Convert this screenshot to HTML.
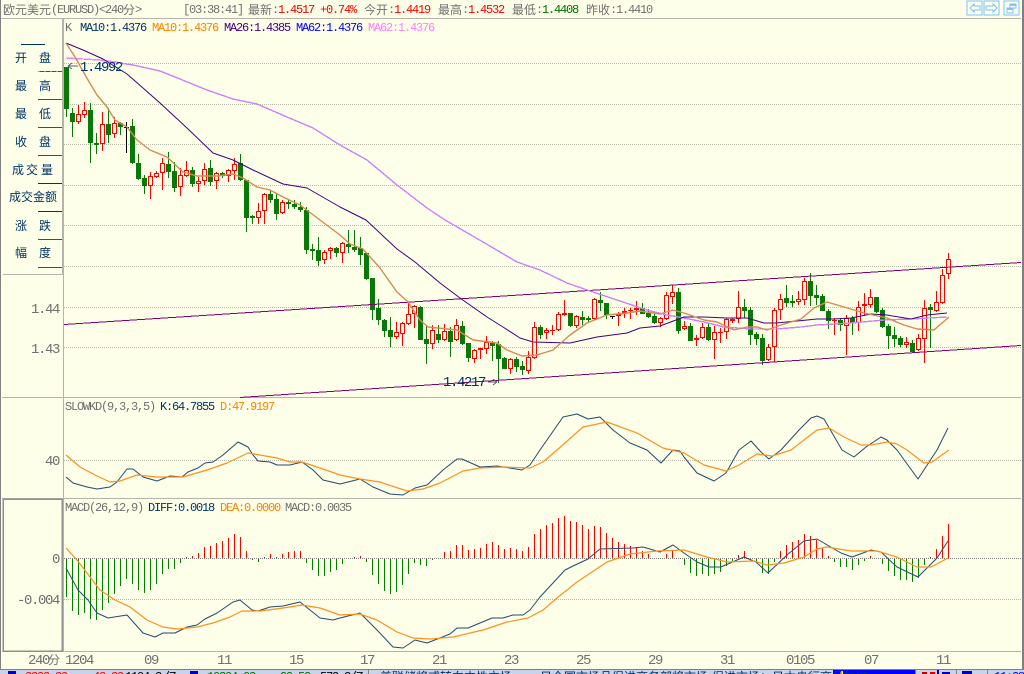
<!DOCTYPE html>
<html><head><meta charset="utf-8"><style>
html,body{margin:0;padding:0;background:#fdffe8;width:1024px;height:674px;overflow:hidden}
svg{display:block}
text{white-space:pre}
.c{font:12px "WenQuanYi Zen Hei","Noto Sans CJK SC",sans-serif}
.m{font:12px "Liberation Mono",monospace;letter-spacing:-1.2px}
.a{font:14px "Liberation Mono",monospace;letter-spacing:-1.4px;fill:#707070}
.g{fill:#707070}.r{fill:#f00}.gr{fill:#007000}.n{fill:#003366}.o{fill:#ff8000}
</style></head><body>
<svg id="s" xmlns="http://www.w3.org/2000/svg" width="1024" height="674" viewBox="0 0 1024 674">
<rect width="1024" height="674" fill="#fdffe8"/>
<g shape-rendering="crispEdges">
<g stroke="#b8b8a8" stroke-dasharray="1 1" fill="none">
<path d="M64 63.5H1021M64 104.5H1021M64 144.5H1021M64 185.5H1021M64 225.5H1021M64 266.5H1021M64 307.5H1021M64 347.5H1021M64 460.5H1021M64 599.5H1021"/>
<path d="M64 558.5H1021" stroke="#808078"/>
</g>
<path d="M2 397.5H1021M2 498.5H1021M2 651.5H1021" stroke="#b4b4ac" fill="none"/>
<path d="M1 18.5H1021" stroke="#b4b4ac"/>
<path d="M63.5 18V651M3 274.5H63M62.5 18V274" stroke="#b4b4ac" fill="none"/>
<rect x="0" y="0" width="1" height="670" fill="#808080"/>
<rect x="1022" y="0" width="2" height="670" fill="#808080"/>
<rect x="3" y="499" width="59" height="152" fill="none" stroke="#909090" stroke-width="1.5"/>
<rect x="0" y="670" width="1024" height="4" fill="#c8d4ec"/>
<rect x="0" y="669" width="1024" height="1" fill="#808080"/>
<rect x="833" y="670" width="82" height="4" fill="#0000ff"/>
<rect x="840" y="671" width="3" height="3" fill="#ffff00"/>
<rect x="368" y="670" width="1" height="4" fill="#808080"/>
<rect x="915" y="670" width="1" height="4" fill="#808080"/>
<rect x="956" y="670" width="1" height="4" fill="#808080"/>
<rect x="987" y="670" width="1" height="4" fill="#808080"/>
<rect x="962" y="671" width="10" height="3" fill="#0000c0"/>
<rect x="8" y="671" width="8" height="3" fill="#0000c0"/>
<rect x="190" y="671" width="8" height="3" fill="#0000c0"/>
<rect x="922" y="672" width="5" height="2" fill="#c00000"/><rect x="930" y="672" width="5" height="2" fill="#e00000"/><rect x="937" y="670" width="2" height="4" fill="#0000c0"/><rect x="942" y="672" width="8" height="2" fill="#0000c0"/>
<path d="M21 44.5H45" stroke="#003366"/>
<g stroke-width="1" fill="none">
<path d="M38 71.5H62" stroke="#008000"/><path d="M38 71.5H62" stroke="#ff8000" stroke-dasharray="2 4"/>
<path d="M38 99.5H62M38 155.5H62M38 239.5H62M38 267.5H62" stroke="#f00"/>
<path d="M38 127.5H62" stroke="#008000"/>
<path d="M38 183.5H62M38 211.5H62" stroke="#003366"/>
</g>
<rect x="967" y="1" width="15" height="14" fill="none" stroke="#80c0ff"/>
<rect x="984" y="1" width="15" height="14" fill="none" stroke="#80c0ff"/>
<rect x="1004" y="1" width="15" height="14" fill="none" stroke="#80c0ff"/>
<path d="M970 8 L974 4V6H980V10H974V12Z" fill="none" stroke="#80c0ff"/>
<path d="M997 8 L993 4V6H986V10H993V12Z" fill="none" stroke="#80c0ff"/>
<rect x="1010" y="4" width="6" height="4" fill="#fdffe8" stroke="#80c0ff"/><rect x="1010" y="4" width="6" height="2" fill="#80c0ff"/>
<rect x="1007" y="8" width="6" height="5" fill="#fdffe8" stroke="#80c0ff"/><rect x="1007" y="8" width="6" height="2" fill="#80c0ff"/>
<g id="cs"></g>
<path d="M64 324.5L1021 262.5M240 397.5L1021 345.5" stroke="#800070" fill="none"/>
<path d="M66 58 83 59 100 60 133 65 160 71 180 79 207 90 233 99 257 104 287 117 313 128 340 145 367 160 397 185 427 208 445 220 483 242 517 262 540 270 567 283 590 291 623 302 647 310 667 315 684 318 704 322 724 327 751 329 777 329 801 327 817 325 851 323 884 320 911 319 947 317" fill="none" stroke="#cc80ff" stroke-width="1.4"/>
<path d="M66 58 83 59 100 60 118 62" fill="none" stroke="#ff80ff" stroke-width="1"/>
</g>
<g fill="none" stroke-linejoin="round">
<polyline stroke="#400080" points="66,43 83,50 103,59 127,74 143,88 160,103 187,128 213,153 233,160 253,170 283,184 307,188 340,207 366,220 397,249 415,262 440,283 460,298 487,317 503,327 520,338 533,342 570,343 597,337 627,333 640,328 660,326 684,317 704,317 727,318 747,318 764,323 776,323 797,321 817,319 834,319 851,318 871,314 887,315 911,319 927,315 947,313"/>
<polyline stroke="#d68a50" stroke-width="1.4" points="66,43 75,57 88,80 97,95 107,107 115,120 127,127 137,140 150,150 167,157 183,172 197,176 217,176 233,174 243,178 257,187 270,190 283,197 300,205 320,220 340,235 350,244 363,249 380,268 397,292 408,302 420,320 428,327 457,330 473,340 497,343 507,350 522,356 537,355 553,350 570,335 587,323 607,315 627,313 640,311 660,314 673,310 684,313 704,320 717,322 734,330 747,327 757,327 767,330 781,325 801,319 814,308 827,302 844,307 864,313 887,318 904,325 917,329 934,330 949,317"/>
<g id="hist"></g>
<polyline stroke="#24496e" points="66,477 73,483 87,487 97,489 110,487 117,482 127,469 133,469 143,477 157,481 170,476 182,477 188,472 198,468 205,463 213,462 223,455 230,449 238,442 248,447 253,455 258,461 270,462 277,465 290,465 302,462 313,470 323,480 340,484 360,479 373,487 390,494 403,495 415,488 427,485 443,470 457,459 462,459 480,467 497,466 522,470 530,465 540,450 563,417 577,414 588,419 600,417 613,430 630,443 647,450 661,463 673,450 680,451 684,457 697,473 714,481 726,473 739,450 751,441 761,452 769,459 781,450 799,430 811,418 817,416 824,419 842,450 854,457 866,447 881,437 887,440 897,450 918,479 937,450 948,428"/>
<polyline stroke="#ff9020" stroke-width="1.2" points="66,455 80,467 97,476 110,482 120,481 137,475 157,477 183,477 207,470 227,463 248,453 277,458 290,462 302,462 320,468 340,475 360,479 380,482 407,491 423,489 440,483 463,471 480,468 503,467 530,468 543,462 557,450 583,427 607,422 637,433 663,448 684,453 704,465 726,471 739,465 757,454 772,456 791,450 817,430 829,428 844,437 861,445 871,445 887,442 897,444 907,450 924,463 932,462 949,450"/>
<polyline stroke="#24496e" points="66,568 78,590 88,600 97,613 108,618 127,615 143,633 155,637 163,633 175,633 187,627 197,625 205,619 217,613 233,602 240,600 252,610 258,611 270,607 283,606 300,602 320,618 333,620 340,618 360,613 377,630 393,647 403,648 415,640 427,643 450,634 457,628 468,628 492,618 503,618 513,615 523,615 530,610 540,597 553,583 565,570 573,566 588,559 600,549 633,548 643,547 660,552 673,545 684,553 697,562 709,567 721,567 744,557 756,562 768,573 787,555 804,541 817,539 841,553 852,557 871,550 881,552 897,567 918,577 937,558 948,541"/>
<polyline stroke="#ff9020" stroke-width="1.2" points="66,548 77,560 87,573 100,590 115,600 130,607 147,620 163,627 177,629 197,627 213,623 230,617 242,611 260,611 283,608 302,605 320,608 340,615 360,614 377,620 397,632 413,638 430,639 453,637 483,630 507,622 528,618 543,610 557,598 577,582 607,562 630,554 657,551 684,550 707,557 727,562 754,561 767,565 784,563 804,557 817,549 827,547 851,551 877,551 897,557 917,567 931,567 948,558"/>
</g>
<path d="M68 66H78M68 66l4-3M68 66l4 3" stroke="#506070" fill="none"/>
<path d="M488 382H497M497 382l-4-3M497 382l-4 3" stroke="#506070" fill="none"/>
<text class="a n" x="80" y="71">1.4992</text>
<text class="a n" x="443" y="386">1.4217</text>

<text class="c g" x="3" y="14">欧元美元</text><text class="m g" x="51" y="13">(EURUSD)&lt;240</text><text class="c g" x="123" y="14">分</text><text class="m g" x="135" y="13">&gt;</text>
<text class="m g" x="183" y="13">[03:38:41]</text>
<text class="c g" x="248" y="14">最新</text><text class="m g" x="272" y="13">:</text><text class="m r" x="278" y="13">1.4517</text><text class="m r" x="320" y="13">+0.74%</text>
<text class="c g" x="364" y="14">今开</text><text class="m g" x="388" y="13">:</text><text class="m r" x="394" y="13">1.4419</text>
<text class="c g" x="438" y="14">最高</text><text class="m g" x="462" y="13">:</text><text class="m r" x="468" y="13">1.4532</text>
<text class="c g" x="512" y="14">最低</text><text class="m g" x="536" y="13">:</text><text class="m gr" x="542" y="13">1.4408</text>
<text class="c g" x="586" y="14">昨收</text><text class="m g" x="610" y="13">:</text><text class="m g" x="616" y="13">1.4410</text>

<text class="m g" x="65" y="31">K</text>
<text class="m n" x="80" y="31">MA10:1.4376</text>
<text class="m o" x="152" y="31">MA10:1.4376</text>
<text class="m" fill="#400080" x="224" y="31">MA26:1.4385</text>
<text class="m" fill="#0000ff" x="296" y="31">MA62:1.4376</text>
<text class="m" fill="#ff80ff" x="368" y="31">MA62:1.4376</text>

<g class="c n">
<text x="15" y="62">开</text><text x="39" y="62">盘</text>
<text x="15" y="90">最</text><text x="39" y="90">高</text>
<text x="15" y="118">最</text><text x="39" y="118">低</text>
<text x="15" y="146">收</text><text x="39" y="146">盘</text>
<text x="12" y="174">成</text><text x="26" y="174">交</text><text x="41" y="174">量</text>
<text x="9" y="201">成交金额</text>
<text x="15" y="230">涨</text><text x="39" y="230">跌</text>
<text x="15" y="257">幅</text><text x="39" y="257">度</text>
</g>

<text class="a" x="31" y="313">1.44</text>
<text class="a" x="31" y="353">1.43</text>
<text class="a" x="45" y="465">40</text>
<text class="a" x="52" y="563">0</text>
<text class="a" x="17" y="604">-0.004</text>
<text class="a" x="28" y="664">240</text><text class="c g" x="48" y="664">分</text>
<g class="a">
<text x="65" y="664">1204</text><text x="144" y="664">09</text><text x="217" y="664">11</text><text x="289" y="664">15</text><text x="360" y="664">17</text><text x="432" y="664">21</text><text x="504" y="664">23</text><text x="576" y="664">25</text><text x="648" y="664">29</text><text x="720" y="664">31</text><text x="786" y="664">0105</text><text x="864" y="664">07</text><text x="936" y="664">11</text>
</g>
<text class="m g" x="65" y="410">SLOWKD(9,3,3,5)</text>
<text class="m n" x="160" y="410">K:64.7855</text>
<text class="m o" x="220" y="410">D:47.9197</text>
<text class="m g" x="65" y="511">MACD(26,12,9)</text>
<text class="m n" x="148" y="511">DIFF:0.0018</text>
<text class="m o" x="220" y="511">DEA:0.0000</text>
<text class="m g" x="285" y="511">MACD:0.0035</text>

<text class="m r" x="25" y="680">3323.32</text>
<text class="m r" x="93" y="680">43.32</text>
<text class="m" x="125" y="680">1104.3</text><text class="c" x="165" y="681">亿</text>
<text class="m gr" x="207" y="680">10304.03</text>
<text class="m gr" x="280" y="680">92.52</text>
<text class="m" x="320" y="680">573.3</text><text class="c" x="352" y="681">亿</text>
<text class="c n" x="380" y="681">美联储将或转向中性立场</text>
<text class="c n" x="540" y="681">日全国市场品促进商务部将市场</text>
<text class="c n" x="712" y="681">促进市场：日本央行商品标准</text>
<text class="m" fill="#0000ff" x="994" y="680">11:28</text>
</svg>
<script>
var D=[0,67,109,67,117,0,113,122,108,137,1,114,122,105,124,1,110,115,102,118,0,110,143,103,163,0,143,145,133,154,1,124,144,112,151,0,124,135,108,143,1,123,134,117,138,0,123,127,122,135,2,127,128,122,153,0,126,163,119,164,0,163,179,154,180,0,178,186,175,194,1,176,186,172,199,1,173,177,171,178,1,163,173,158,190,0,164,172,152,178,0,171,188,162,192,1,175,187,168,196,1,170,176,161,177,0,170,184,167,187,1,181,184,177,192,1,169,181,163,185,0,168,182,160,186,1,173,181,172,189,0,173,176,172,178,1,170,176,169,182,1,164,171,158,180,0,163,180,154,181,0,180,218,180,232,0,216,218,215,224,1,211,218,203,224,1,194,211,193,224,0,194,200,190,203,0,199,214,193,220,1,202,213,200,214,0,202,204,199,209,0,204,207,200,209,0,207,210,202,212,0,210,250,207,254,0,249,251,244,260,0,250,261,237,266,1,252,260,250,264,1,248,251,247,259,0,248,253,247,257,1,243,253,242,263,0,244,247,230,253,0,247,250,230,252,0,248,255,237,265,0,253,279,253,280,0,278,310,278,320,0,308,320,299,325,0,320,331,319,337,0,330,337,317,347,1,332,337,322,339,1,323,334,322,346,1,314,324,303,325,1,306,314,305,328,0,307,340,306,340,0,339,344,325,364,1,330,344,325,349,0,334,340,325,343,1,331,340,324,341,0,331,342,327,357,1,325,340,319,341,0,326,344,321,345,0,343,358,343,362,1,350,359,349,363,1,348,350,348,359,1,342,349,336,354,0,343,346,341,361,0,344,359,341,383,0,358,369,357,369,1,359,369,358,374,0,359,367,357,372,0,366,370,361,375,1,357,371,351,374,1,327,358,322,359,0,327,335,325,339,1,330,333,328,339,1,330,331,325,335,1,314,330,312,331,1,313,315,300,316,0,313,326,313,327,1,316,326,315,328,0,317,320,311,325,0,318,320,316,322,1,299,319,298,320,0,300,303,292,311,0,303,315,303,319,2,316,317,316,319,1,314,316,312,326,1,311,313,308,318,1,310,311,308,319,1,308,310,301,315,0,308,314,303,314,0,313,317,309,318,0,316,323,314,324,1,318,323,317,327,1,295,319,292,320,1,292,297,285,304,0,292,331,288,334,1,326,329,321,330,0,326,341,323,341,1,338,340,335,346,1,327,338,323,339,0,327,340,324,341,1,332,340,326,359,1,332,333,328,343,1,319,332,318,339,1,319,321,318,323,1,307,319,291,323,0,307,311,299,318,0,310,335,307,345,0,334,339,332,345,0,338,361,334,365,1,347,360,344,361,1,310,347,308,362,1,299,310,294,320,0,298,303,285,307,0,301,303,295,307,1,299,302,291,305,1,281,300,278,305,0,281,296,273,306,0,295,298,285,305,0,296,311,294,311,0,311,321,309,329,1,320,321,318,335,0,320,325,318,331,1,318,326,315,355,0,318,323,316,335,1,307,323,301,331,1,304,306,293,316,1,297,305,289,308,0,297,312,297,313,0,310,327,308,328,0,326,336,324,349,0,335,339,327,347,0,338,345,336,347,1,342,345,337,348,0,343,352,340,353,1,338,350,334,351,1,308,339,300,363,0,307,310,304,348,1,302,311,291,312,1,275,303,269,304,1,259,274,253,279];
var H=[596,610,614,612,618,619,609,602,593,585,578,583,589,592,589,583,573,568,568,562,557,556,553,547,546,543,541,538,534,537,551,559,561,557,554,557,554,552,551,551,562,569,575,575,571,569,563,558,557,556,561,574,583,590,593,591,584,573,562,564,565,559,558,552,551,545,545,550,549,548,544,542,545,549,548,549,551,547,534,529,525,523,518,516,521,522,525,529,526,527,533,538,542,544,546,547,551,554,558,558,554,550,558,564,572,575,573,575,573,571,565,560,555,551,558,562,572,573,561,551,545,542,540,534,536,540,548,556,561,566,566,569,564,560,556,558,563,570,575,579,579,581,577,564,557,549,536,524];
var bg='#fdffe8',o='';
for(var i=0;i<D.length/5;i++){
 var x=66+6*i,t=D[i*5],a=D[i*5+1],b=D[i*5+2],w=D[i*5+3],v=D[i*5+4];
 var c=t==0?'#087808':t==1?'#f00':'#000';
 o+='<rect x="'+x+'" y="'+w+'" width="1" height="'+(v-w)+'" fill="'+c+'"/>';
 if(t==1&&b-a>2){o+='<rect x="'+(x-1.5)+'" y="'+(a+.5)+'" width="4" height="'+(b-a-1)+'" fill="'+bg+'" stroke="'+c+'"/>';}
 else{o+='<rect x="'+(x-2)+'" y="'+a+'" width="5" height="'+Math.max(1,b-a)+'" fill="'+c+'"/>';}
}
document.getElementById('cs').innerHTML=o;
var h='';
for(var j=0;j<H.length;j++){
 var X=66+6*j,y=H[j];
 if(y>558)h+='<rect x="'+X+'" y="559" width="1" height="'+(y-558)+'" fill="#008000"/>';
 else if(y<558)h+='<rect x="'+X+'" y="'+y+'" width="1" height="'+(558-y)+'" fill="#f00"/>';
}
document.getElementById('hist').innerHTML=h;
document.getElementById('hist').setAttribute('shape-rendering','crispEdges');
</script>
</body></html>
